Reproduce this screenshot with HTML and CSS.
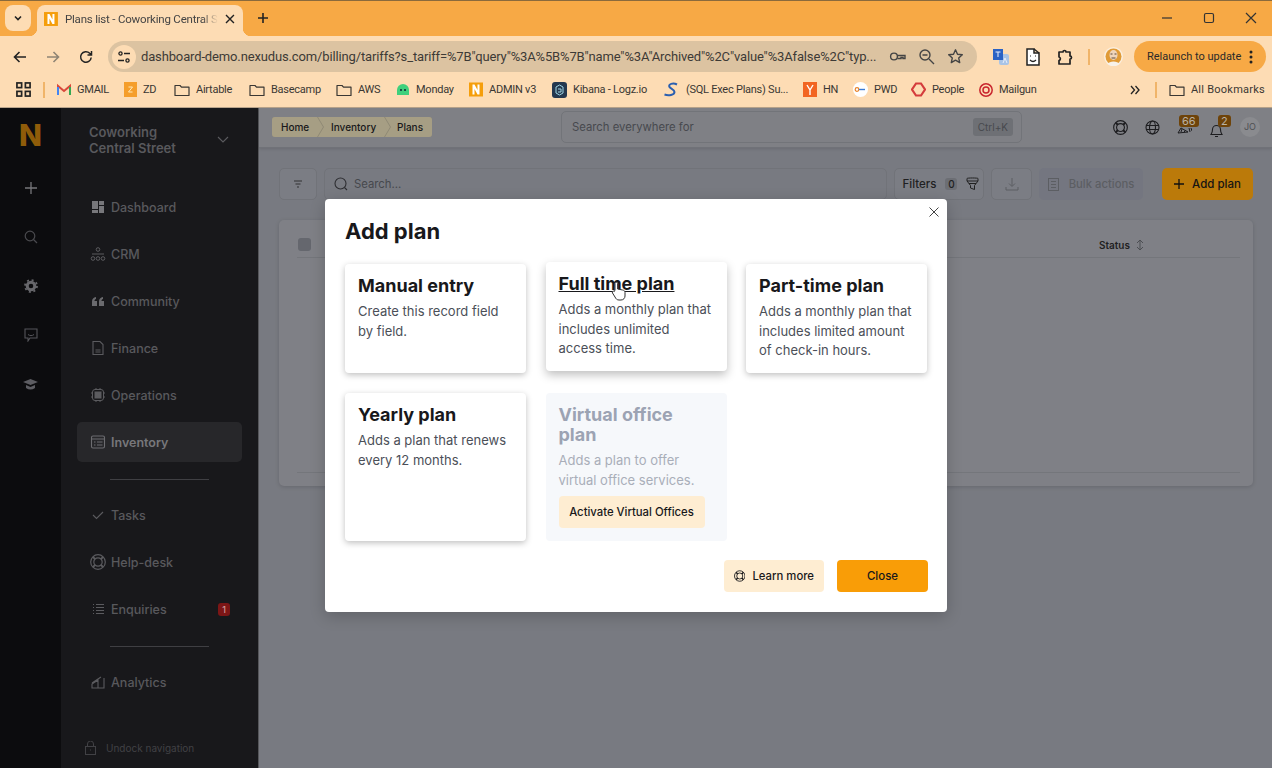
FILE: index.html
```html
<!DOCTYPE html>
<html lang="en">
<head>
    <meta charset="UTF-8">
    <meta name="viewport" content="width=device-width, initial-scale=1.0">
    <title>Plans list - Coworking Central Street</title>
    <link rel="stylesheet" href="styles.css">
</head>
<body>
    <svg class="defs" width="0" height="0">
        <symbol id="folder" viewBox="0 0 16 16"><path d="M1 3.500h5l1.500 1.700H15v8.300H1z" fill="none" stroke="currentColor" stroke-width="1.200" stroke-linejoin="round"/></symbol>
        <symbol id="buoy" viewBox="0 0 16 16"><g fill="none" stroke="currentColor" stroke-width="1.200"><circle cx="8" cy="8" r="7.300"/><circle cx="8" cy="8" r="4.200"/><path d="M2.900 2.900l2.200 2.200M13.100 2.900l-2.200 2.200M2.900 13.100l2.200-2.200M13.100 13.100l-2.200-2.200" stroke-width="2"/></g></symbol>
        <symbol id="nbox" viewBox="0 0 14 14"><rect width="14" height="14" fill="#f59e0b"/><path d="M3.500 12V2h2l3 5.600V2h2v10h-2l-3-5.600V12z" fill="#fff"/></symbol>
    </svg>

    <!-- Barra del navegador -->
    <header class="browser">
        <div class="tabstrip">
            <button class="tab-search">
                <svg width="10" height="10" viewBox="0 0 10 10"><path d="M2 3.500l3 3 3-3" fill="none" stroke="#222" stroke-width="1.600"/></svg>
            </button>
            <div class="tab">
                <svg class="fav" width="14" height="14"><use href="#nbox"/></svg>
                <span class="tab-title">Plans list - Coworking Central S</span>
                <svg width="10" height="10" viewBox="0 0 10 10"><path d="M1 1l8 8M9 1l-8 8" stroke="#222" stroke-width="1.400"/></svg>
            </div>
            <svg class="new-tab" width="12" height="12" viewBox="0 0 12 12"><path d="M6 1v10M1 6h10" stroke="#222" stroke-width="1.600"/></svg>
            <div class="win-controls">
                <svg width="12" height="12" viewBox="0 0 12 12"><path d="M1 6h10" stroke="#333" stroke-width="1.200"/></svg>
                <svg width="12" height="12" viewBox="0 0 12 12"><rect x="1.500" y="1.500" width="9" height="9" rx="1.500" fill="none" stroke="#333" stroke-width="1.200"/></svg>
                <svg width="12" height="12" viewBox="0 0 12 12"><path d="M1 1l10 10M11 1L1 11" stroke="#333" stroke-width="1.200"/></svg>
            </div>
        </div>

        <div class="toolbar">
            <div class="nav-btns">
                <svg width="16" height="16" viewBox="0 0 16 16"><path d="M14 8H3M7.500 3L2.500 8l5 5" fill="none" stroke="#222" stroke-width="1.600"/></svg>
                <svg width="16" height="16" viewBox="0 0 16 16"><path d="M2 8h11M8.500 3l5 5-5 5" fill="none" stroke="#8f8474" stroke-width="1.600"/></svg>
                <svg width="16" height="16" viewBox="0 0 16 16"><path d="M13.200 8.500a5.300 5.300 0 1 1-1.500-4.200L13.500 6M13.500 2v4h-4" fill="none" stroke="#222" stroke-width="1.500"/></svg>
            </div>
            <div class="omnibox">
                <span class="site-info">
                    <svg width="14" height="14" viewBox="0 0 14 14"><g fill="none" stroke="#222" stroke-width="1.300"><circle cx="3.500" cy="3.500" r="1.600"/><path d="M7 3.500h6M1 10.500h6"/><circle cx="10.500" cy="10.500" r="1.600"/></g></svg>
                </span>
                <span class="url">dashboard-demo.nexudus.com/billing/tariffs?s_tariff=%7B"query"%3A%5B%7B"name"%3A"Archived"%2C"value"%3Afalse%2C"typ...</span>
                <div class="omni-icons">
                    <svg width="17" height="17" viewBox="0 0 17 17"><g fill="none" stroke="#444" stroke-width="1.400"><circle cx="5" cy="8.500" r="3.400"/><path d="M8.400 7.500H16v3h-2v-1h-2v1H8.400"/></g></svg>
                    <svg width="17" height="17" viewBox="0 0 17 17"><g fill="none" stroke="#444" stroke-width="1.400"><circle cx="7" cy="7" r="5"/><path d="M11 11l5 5M4.500 7h5"/></g></svg>
                    <svg width="17" height="17" viewBox="0 0 17 17"><path d="M8.500 1.800l2 4.400 4.800.5-3.600 3.200 1 4.700-4.200-2.400-4.200 2.400 1-4.700L1.700 6.700l4.800-.5z" fill="none" stroke="#444" stroke-width="1.400" stroke-linejoin="round"/></svg>
                </div>
            </div>
            <div class="ext-icons">
                <svg width="18" height="18" viewBox="0 0 18 18"><rect x="7" y="6" width="10" height="11" rx="2" fill="#a9c4e6"/><rect x="1" y="1" width="10" height="11" fill="#2a62c4"/><path d="M3.500 4h5M6 4v5M11 15l2-5 2 5" fill="none" stroke="#e8eefa"/></svg>
                <svg width="16" height="18" viewBox="0 0 16 18"><path d="M2 1h7v4h5v12H2z" fill="#fff" stroke="#222" stroke-width="1.500"/><path d="M9 1l5 4" stroke="#222" stroke-width="1.500"/><path d="M5 8h1M10 8h1M5 12c2 2 4 2 6 0" fill="none" stroke="#222" stroke-width="1.200"/></svg>
                <svg width="18" height="18" viewBox="0 0 18 18"><path d="M3 4h4a1.500 1.500 0 0 1 3 0h4v4a1.500 1.500 0 0 1 0 3v5H3v-3.500a1.800 1.800 0 0 0 0-3.500z" fill="none" stroke="#222" stroke-width="1.700" stroke-linejoin="round"/></svg>
                <span class="ext-sep"></span>
                <svg width="19" height="19" viewBox="0 0 19 19"><circle cx="9.500" cy="9.500" r="9.500" fill="#fbeedd"/><circle cx="9.500" cy="9.500" r="8" fill="#e09a35"/><ellipse cx="9.500" cy="8" rx="4" ry="5" fill="#efd5bb"/><path d="M3.500 17c1.500-3.500 10.500-3.500 12 0a9 9 0 0 1-12 0z" fill="#f7f2ea"/><path d="M6.500 7h2M10.500 7h2M7.500 11h4" stroke="#5d4a38"/></svg>
            </div>
            <button class="relaunch">Relaunch to update
                <svg width="4" height="14" viewBox="0 0 4 14"><g fill="#222"><circle cx="2" cy="2" r="1.500"/><circle cx="2" cy="7" r="1.500"/><circle cx="2" cy="12" r="1.500"/></g></svg>
            </button>
        </div>

        <nav class="bookmarks">
            <svg class="apps" width="15" height="15" viewBox="0 0 16 16"><g fill="none" stroke="#222" stroke-width="1.800"><rect x="1" y="1" width="5" height="5"/><rect x="10" y="1" width="5" height="5"/><rect x="1" y="10" width="5" height="5"/><rect x="10" y="10" width="5" height="5"/></g></svg>
            <span class="bm-sep"></span>
            <a class="bm bm-gmail"><svg width="14" height="14" viewBox="0 0 14 14"><path d="M1 12V3l6 5 6-5v9" fill="none" stroke="#d9483b" stroke-width="2"/><path d="M1 12V4" stroke="#4285f4" stroke-width="2"/><path d="M13 12V4" stroke="#34a853" stroke-width="2"/></svg>GMAIL</a>
            <a class="bm bm-zd"><svg width="13" height="15" viewBox="0 0 13 15"><rect width="13" height="15" fill="#f59e2b"/><path d="M4.500 5h4L4.500 10h4" fill="none" stroke="#ffe9b8"/></svg>ZD</a>
            <a class="bm bm-air"><svg width="16" height="16"><use href="#folder"/></svg>Airtable</a>
            <a class="bm bm-base"><svg width="16" height="16"><use href="#folder"/></svg>Basecamp</a>
            <a class="bm bm-aws"><svg width="16" height="16"><use href="#folder"/></svg>AWS</a>
            <a class="bm bm-mon"><svg width="14" height="14" viewBox="0 0 14 14"><path d="M1 12V7a6 6 0 0 1 12 0v5z" fill="#3fd07c"/><circle cx="5" cy="7" r="1" fill="#123"/><circle cx="9" cy="7" r="1" fill="#123"/></svg>Monday</a>
            <a class="bm bm-n"><svg width="14" height="15"><use href="#nbox"/></svg>ADMIN v3</a>
            <a class="bm bm-kib"><svg width="15" height="16" viewBox="0 0 15 16"><rect width="15" height="16" rx="3" fill="#24384f"/><path d="M4 5l3.500-2L11 5v6l-3.500 2L4 11zM6 7h3v3H6" fill="none" stroke="#9fd7e6"/></svg>Kibana - Logz.io</a>
            <a class="bm bm-sql"><svg width="17" height="15" viewBox="0 0 17 15"><path d="M14 2.500C10 .5 5 2 6.500 5c1 2 5 2 5 5 0 3-6 4-10 2.500" fill="none" stroke="#2a5fb0" stroke-width="2"/></svg>(SQL Exec Plans) Su...</a>
            <a class="bm bm-hn"><svg width="14" height="15" viewBox="0 0 14 15"><rect width="14" height="15" fill="#f26522"/><path d="M4 3l3 5 3-5M7 8v5" fill="none" stroke="#fff" stroke-width="1.400"/></svg>HN</a>
            <a class="bm bm-pwd"><svg width="15" height="15" viewBox="0 0 15 15"><circle cx="7.500" cy="7.500" r="7.500" fill="#fff"/><circle cx="4" cy="7.500" r="1.800" fill="none" stroke="#e8842b" stroke-width="1.200"/><path d="M6 7.500h6" stroke="#3a7bd5" stroke-width="1.400"/></svg>PWD</a>
            <a class="bm bm-peo"><svg width="15" height="15" viewBox="0 0 15 15"><path d="M5 1.500h5l4 6-4 6H5l-4-6z" fill="none" stroke="#d43c3c" stroke-width="2.200"/></svg>People</a>
            <a class="bm bm-mail"><svg width="14" height="14" viewBox="0 0 14 14"><g fill="none" stroke="#c9252d" stroke-width="1.500"><circle cx="7" cy="7" r="6.200"/><circle cx="7" cy="7" r="3"/></g></svg>Mailgun</a>
            <div class="bm-end">
                <svg class="bm-more" width="10" height="10" viewBox="0 0 10 10"><path d="M1 1l3.500 4L1 9M5.500 1L9 5 5.500 9" fill="none" stroke="#222" stroke-width="1.300"/></svg>
                <span class="bm-sep"></span>
                <a class="bm bm-all"><svg width="16" height="16"><use href="#folder"/></svg>All Bookmarks</a>
            </div>
        </nav>
    </header>

    <div class="app">
        <!-- Riel de iconos -->
        <aside class="rail">
            <span class="rail-logo">N</span>
            <a class="rail-item"><svg width="14" height="14" viewBox="0 0 14 14"><path d="M7 1v12M1 7h12" stroke="#76767a" stroke-width="1.300"/></svg></a>
            <a class="rail-item"><svg width="14" height="14" viewBox="0 0 14 14"><g fill="none" stroke="#4a4a4e" stroke-width="1.200"><circle cx="6" cy="6" r="4.800"/><path d="M9.500 9.500L13 13"/></g></svg></a>
            <a class="rail-item"><svg width="14" height="14" viewBox="0 0 14 14"><circle cx="7" cy="7" r="3.800" fill="none" stroke="#67676b" stroke-width="3"/><circle cx="7" cy="7" r="6" fill="none" stroke="#67676b" stroke-width="1.800" stroke-dasharray="2 2.700"/></svg></a>
            <a class="rail-item"><svg width="14" height="14" viewBox="0 0 14 14"><path d="M1 1h12v9H6l-2 3v-3H1z" fill="none" stroke="#55555a" stroke-width="1.100"/><path d="M4 6.500c2 1.500 4 1.500 6 0" fill="none" stroke="#55555a"/></svg></a>
            <a class="rail-item"><svg width="15" height="13" viewBox="0 0 15 13"><path d="M0 4l7.500-3L15 4 7.500 7z" fill="#5d5d62"/><path d="M3 7v3c3 2 6 2 9 0V7L7.500 9z" fill="#5d5d62"/></svg></a>
        </aside>

        <!-- Navegacion -->
        <aside class="sidebar">
            <div class="brand">
                <span>Coworking<br>Central Street</span>
                <svg width="12" height="8" viewBox="0 0 12 8"><path d="M1 1l5 5 5-5" fill="none" stroke="#5b5b5f" stroke-width="1.100"/></svg>
            </div>
            <ul class="nav">
                <li class="nav-item"><svg width="16" height="16" viewBox="0 0 16 16" fill="#77777b"><rect x="2" y="2" width="6" height="8"/><rect x="9" y="2" width="5" height="4"/><rect x="9" y="7" width="5" height="7"/><rect x="2" y="11" width="6" height="3"/></svg>Dashboard</li>
                <li class="nav-item"><svg width="16" height="16" viewBox="0 0 16 16" fill="none" stroke="#5b5b5f"><circle cx="8" cy="3.500" r="1.800"/><circle cx="3" cy="12.500" r="1.800"/><circle cx="8" cy="12.500" r="1.800"/><circle cx="13" cy="12.500" r="1.800"/><path d="M2 8h12"/></svg>CRM</li>
                <li class="nav-item"><svg width="16" height="16" viewBox="0 0 16 16" fill="#6a6a6e"><path d="M2 13V8.500C2 6 3.500 4.500 6 4v2c-1 .3-1.500 1-1.500 2H7v5zM9 13V8.500C9 6 10.500 4.500 13 4v2c-1 .3-1.500 1-1.500 2H14v5z"/></svg>Community</li>
                <li class="nav-item"><svg width="16" height="16" viewBox="0 0 16 16" fill="none" stroke="#5b5b5f" stroke-width="1.100"><path d="M3 1.500h7l3 3v10H3zM5.500 10h5M5.500 12h5"/></svg>Finance</li>
                <li class="nav-item"><svg width="16" height="16" viewBox="0 0 16 16" fill="none" stroke="#5b5b5f"><rect x="2.500" y="2.500" width="11" height="11" rx="2.500"/><rect x="5" y="5" width="6" height="6" fill="#5b5b5f"/><path d="M1 6h1M1 10h1M14 6h1M14 10h1M6 1v1M10 1v1M6 14v1M10 14v1"/></svg>Operations</li>
                <li class="nav-item active"><svg width="16" height="16" viewBox="0 0 16 16" fill="none" stroke="#6d6d71" stroke-width="1.100"><rect x="1.500" y="2" width="13" height="12" rx="1.500"/><path d="M1.500 5h13M4 8h1.500M7 8h5.500M4 11h1.500M7 11h5.500"/></svg>Inventory</li>
            </ul>
            <hr class="nav-rule">
            <ul class="nav">
                <li class="nav-item"><svg width="16" height="16" viewBox="0 0 16 16" fill="none" stroke="#5b5b5f" stroke-width="1.100"><path d="M3 8l3.500 3.500L13 5"/></svg>Tasks</li>
                <li class="nav-item"><svg width="16" height="16" color="#5b5b5f"><use href="#buoy"/></svg>Help-desk</li>
                <li class="nav-item"><svg width="16" height="16" viewBox="0 0 16 16" fill="none" stroke="#5b5b5f" stroke-width="1.100"><path d="M6 3.500h8M6 6.500h8M6 9.500h8M6 12.500h8M3 3.500h1M3 6.500h1M3 9.500h1M3 12.500h1"/></svg>Enquiries<span class="nav-badge">1</span></li>
            </ul>
            <hr class="nav-rule">
            <ul class="nav">
                <li class="nav-item"><svg width="16" height="16" viewBox="0 0 16 16" fill="none" stroke="#5b5b5f" stroke-width="1.100"><path d="M2 14V10l6-4v8zM8 14h6V4M2 14h6M2 9l9-6"/></svg>Analytics</li>
            </ul>
            <div class="undock">
                <svg width="11" height="14" viewBox="0 0 11 14" fill="none" stroke="#414145"><rect x=".5" y="5.500" width="10" height="8"/><path d="M2.500 5.500V3a3 3 0 0 1 6 0v2.500"/><path d="M5 9h1"/></svg>
                Undock navigation
            </div>
        </aside>

        <main class="main">
            <div class="topbar">
                <ol class="crumbs">
                    <li class="crumb">Home</li>
                    <li class="crumb">Inventory</li>
                    <li class="crumb">Plans</li>
                </ol>
                <div class="global-search">
                    <span>Search everywhere for</span>
                    <kbd>Ctrl+K</kbd>
                </div>
                <div class="top-icons">
                    <a class="top-icon"><svg width="15" height="15" color="#1d1d20"><use href="#buoy"/></svg></a>
                    <a class="top-icon"><svg width="15" height="15" viewBox="0 0 15 15" fill="none" stroke="#1d1d20" stroke-width="1.100"><circle cx="7.500" cy="7.500" r="6.500"/><ellipse cx="7.500" cy="7.500" rx="3" ry="6.500"/><path d="M1 5.500h13M1 9.500h13"/></svg></a>
                    <a class="top-icon"><svg class="low" width="15" height="8" viewBox="0 0 15 8" fill="none" stroke="#1d1d20"><path d="M1 7l3-5 7 4zM4 6l1-3M7 6.500l1-2M12 2l1 4M14 2l1 3"/></svg><span class="count">66</span></a>
                    <a class="top-icon"><svg class="low" width="15" height="15" viewBox="0 0 15 15" fill="none" stroke="#1d1d20" stroke-width="1.100"><path d="M2 11.500c1-1.500 1.500-2.500 1.500-5a4 4 0 0 1 8 0c0 2.500.5 3.500 1.500 5zM6 13.500h3"/></svg><span class="count count-bell">2</span></a>
                    <span class="avatar">JO</span>
                </div>
            </div>

            <div class="content">
                <div class="list-tools">
                    <button class="tool tool-filter"><svg width="10" height="8" viewBox="0 0 10 8"><path d="M1 1h8M2.500 4h5M4 7h2" stroke="#333" stroke-width="1.100"/></svg></button>
                    <div class="list-search">
                        <svg width="14" height="14" viewBox="0 0 14 14" fill="none" stroke="#2e2e32" stroke-width="1.100"><circle cx="6.500" cy="6.500" r="5.500"/><path d="M10.500 10.500L13 13"/></svg>
                        <span>Search...</span>
                    </div>
                    <button class="tool tool-filters">Filters<span class="zero">0</span>
                        <svg width="13" height="14" viewBox="0 0 13 14" fill="none" stroke="#222"><path d="M1 1.500C1 .8 12 .8 12 1.500v2.500L8.500 8.500v4l-4-1.500V8.500L1 4zM1 4h11M3 6.500h7"/></svg>
                    </button>
                    <button class="tool tool-dl"><svg width="14" height="14" viewBox="0 0 14 14" fill="none" stroke="#5c5e63"><path d="M7 1v8M4 6.500L7 9.500l3-3M1 10v3h12v-3"/></svg></button>
                    <button class="tool tool-bulk"><svg width="11" height="13" viewBox="0 0 11 13" fill="none" stroke="#5c5e63"><rect x=".5" y=".5" width="10" height="12"/><path d="M3 3.500h5M3 6.500h5M3 9.500h5"/></svg>Bulk actions</button>
                    <button class="tool tool-add"><svg width="10" height="10" viewBox="0 0 10 10"><path d="M5 0v10M0 5h10" stroke="#111" stroke-width="1.300"/></svg>Add plan</button>
                </div>
                <section class="table-card">
                    <div class="table-head">
                        <span class="check"></span>
                        <span class="col-status">Status
                            <svg width="8" height="12" viewBox="0 0 8 12" fill="none" stroke="#4c4e53"><path d="M1 4l3-3 3 3M1 8l3 3 3-3M4 1v10"/></svg>
                        </span>
                    </div>
                    <div class="table-foot"></div>
                </section>
            </div>
        </main>

        <!-- Ventana Add plan -->
        <div class="modal-wrap">
            <div class="modal">
                <svg class="modal-x" width="10" height="10" viewBox="0 0 10 10"><path d="M.5.5l9 9M9.500.5l-9 9" stroke="#444" stroke-width="1"/></svg>
                <h2 class="modal-title">Add plan</h2>
                <div class="plan-grid">
                    <article class="plan">
                        <h3>Manual entry</h3>
                        <p>Create this record field by field.</p>
                    </article>
                    <article class="plan plan-hover">
                        <h3>Full time plan</h3>
                        <p>Adds a monthly plan that includes unlimited access time.</p>
                        <svg class="cursor" width="16" height="20" viewBox="0 0 16 20"><path d="M4 9V2.500a1.300 1.300 0 0 1 2.600 0V8l5 1c1.500.3 2.400 1 2.400 2.500V15c0 2-1.500 4-4 4H8c-2 0-3-1-4-3L1.500 12c-.8-1.500.8-2.500 1.800-1.500z" fill="#fff" stroke="#333" stroke-width="1"/></svg>
                    </article>
                    <article class="plan">
                        <h3>Part-time plan</h3>
                        <p>Adds a monthly plan that includes limited amount of check-in hours.</p>
                    </article>
                    <article class="plan">
                        <h3>Yearly plan</h3>
                        <p>Adds a plan that renews every 12 months.</p>
                    </article>
                    <article class="plan plan-off">
                        <h3>Virtual office plan</h3>
                        <p>Adds a plan to offer virtual office services.</p>
                        <button class="btn-soft">Activate Virtual Offices</button>
                    </article>
                </div>
                <div class="modal-foot">
                    <button class="btn-soft btn-learn"><svg width="14" height="14"><use href="#buoy"/></svg>Learn more</button>
                    <button class="btn-close">Close</button>
                </div>
            </div>
        </div>
    </div>
</body>
</html>
```

FILE: styles.css
```css
* {
    box-sizing: border-box;
}
html, body {
    margin: 0;
    height: 100%;
    overflow: hidden;
}
body {
    width: 1272px;
    height: 768px;
    display: flex;
    flex-direction: column;
    font-family: Inter, sans-serif;
    background-color: #77797f;
}
ul, ol {
    list-style: none;
    margin: 0;
    padding: 0;
}
button {
    font-family: inherit;
    border: none;
    cursor: pointer;
}
.defs {
    position: absolute;
}

/* Navegador */
.browser {
    height: 108px;
    flex: none;
    font-family: Roboto, sans-serif;
    color: #2a2a2a;
    background-color: #fddcb4;
}
.tabstrip {
    height: 36px;
    display: flex;
    align-items: flex-end;
    background-color: #f7a945;
    border-top: 1px solid #8a6a3c;
    padding-left: 5px;
}
.tab-search {
    width: 26px;
    height: 26px;
    margin-bottom: 5px;
    padding: 0;
    border-radius: 8px;
    background-color: #fddcb4;
    display: flex;
    align-items: center;
    justify-content: center;
}
.tab {
    position: relative;
    width: 206px;
    height: 31px;
    margin-left: 6px;
    padding: 0 8px 4px 7px;
    display: flex;
    align-items: center;
    gap: 7px;
    font-size: 11.500px;
    letter-spacing: -0.2px;
    border-radius: 8px 8px 0 0;
    background-color: #fddcb4;
}
.tab::before, .tab::after {
    content: "";
    position: absolute;
    bottom: 0;
    width: 8px;
    height: 8px;
}
.tab::before {
    left: -8px;
    background: radial-gradient(circle at 0 0, #f7a945 8px, #fddcb4 8.500px);
}
.tab::after {
    right: -8px;
    background: radial-gradient(circle at 100% 0, #f7a945 8px, #fddcb4 8.500px);
}
.tab-title {
    width: 154px;
    white-space: nowrap;
    color: #444;
    -webkit-mask-image: linear-gradient(90deg, #000 90%, transparent);
    mask-image: linear-gradient(90deg, #000 90%, transparent);
}
.new-tab {
    margin: 0 0 12px 14px;
}
.win-controls {
    margin-left: auto;
    padding-right: 15px;
    margin-bottom: 12px;
    display: flex;
    gap: 30px;
}
.toolbar {
    height: 39px;
    display: flex;
    align-items: center;
    padding: 3px 6px 1px 12px;
}
.nav-btns {
    display: flex;
    gap: 17px;
}
.omnibox {
    width: 869px;
    height: 31px;
    margin-left: 14px;
    display: flex;
    align-items: center;
    border-radius: 16px;
    background-color: #dcc3a1;
    padding-left: 4px;
}
.site-info {
    width: 24px;
    height: 24px;
    flex: none;
    border-radius: 50%;
    background-color: #fddcb4;
    display: flex;
    align-items: center;
    justify-content: center;
}
.url {
    margin-left: 5px;
    width: 735px;
    flex: none;
    white-space: nowrap;
    font-size: 13px;
    letter-spacing: -0.14px;
    color: #3d3a36;
}
.omni-icons {
    margin-left: 13px;
    display: flex;
    gap: 12px;
}
.ext-icons {
    display: flex;
    align-items: center;
    gap: 15px;
    margin-left: 15px;
}
.ext-sep {
    width: 2px;
    height: 16px;
    margin: 0 -1px;
    background-color: #f0b469;
}
.relaunch {
    margin-left: 11px;
    width: 132px;
    height: 31px;
    border-radius: 16px;
    background-color: #f7a945;
    font-family: Roboto, sans-serif;
    font-size: 11px;
    color: #2a2a2a;
    display: flex;
    align-items: center;
    justify-content: space-between;
    padding: 0 13px 0 13px;
    white-space: nowrap;
}
.bookmarks {
    height: 33px;
    display: flex;
    align-items: center;
    padding: 0 7px 3px 16px;
    font-size: 11px;
    letter-spacing: -0.25px;
    border-bottom: 1px solid #b9a58c;
}
.bm {
    display: flex;
    align-items: center;
    gap: 6px;
    white-space: nowrap;
    color: #3a3733;
}
.bm-sep {
    width: 2px;
    height: 16px;
    margin: 0 12px 0 12px;
    background-color: #f0b469;
}
.bm svg {
    flex: none;
}
.bm-gmail { width: 67px; }
.bm-zd { width: 50px; }
.bm-air { width: 75px; }
.bm-base { width: 87px; }
.bm-aws { width: 60px; }
.bm-mon { width: 73px; }
.bm-n { width: 83px; }
.bm-kib { width: 111px; }
.bm-sql { width: 140px; }
.bm-hn { width: 50px; }
.bm-pwd { width: 58px; }
.bm-peo { width: 68px; }
.bm-all {
    letter-spacing: 0.25px;
}
.bm-more {
    margin-right: 3px;
}
.bm-end {
    margin-left: auto;
    display: flex;
    align-items: center;
}

/* Aplicacion */
.app {
    position: relative;
    flex: 1;
    display: flex;
    min-height: 0;
}
.rail {
    width: 61px;
    flex: none;
    background-color: #0c0c0e;
    display: flex;
    flex-direction: column;
    align-items: center;
}
.rail-logo {
    height: 55.500px;
    font-size: 30px;
    font-weight: 800;
    line-height: 54px;
    color: #8f5c09;
}
.rail-item {
    height: 49px;
    display: flex;
    align-items: center;
}
.sidebar {
    width: 198px;
    flex: none;
    display: flex;
    flex-direction: column;
    background-color: #18181b;
    padding-left: 16px;
    color: #59595d;
    font-size: 12.500px;
    border-right: 1px solid #55565a;
}
.brand {
    height: 79px;
    padding: 0 29px 15px 12px;
    display: flex;
    align-items: center;
    justify-content: space-between;
    font-size: 13px;
    font-weight: 600;
    line-height: 16px;
}
.nav {
    display: flex;
    flex-direction: column;
    gap: 7px;
    width: 165px;
}
.nav-item {
    height: 40px;
    display: flex;
    align-items: center;
    gap: 5px;
    padding-left: 13px;
    border-radius: 5px;
    font-weight: 500;
}
.nav-item svg {
    flex: none;
}
.nav-item.active {
    background-color: #27272a;
    color: #77777b;
    font-weight: 600;
}
.nav-badge {
    margin-left: auto;
    margin-right: 12px;
    width: 12px;
    height: 13px;
    border-radius: 3px;
    background-color: #7c1616;
    color: #c99;
    font-size: 9px;
    text-align: center;
    line-height: 13px;
}
.nav-rule {
    width: 99px;
    height: 1px;
    margin: 17px 0 15px 33px;
    border: none;
    background-color: #3f3f43;
}
.undock {
    margin-top: auto;
    padding: 0 0 13px 8px;
    display: flex;
    align-items: center;
    gap: 10px;
    color: #414145;
    font-size: 10px;
    line-height: 14px;
}
.main {
    flex: 1;
    min-width: 0;
    display: flex;
    flex-direction: column;
    background-color: #787a81;
}
.topbar {
    height: 40px;
    flex: none;
    display: flex;
    align-items: center;
    padding: 0 12px 1px 13px;
    background-color: #7f8085;
    border-bottom: 1px solid #707278;
    box-shadow: 0 1px 3px rgba(0, 0, 0, 0.12);
}
.crumbs {
    display: flex;
    flex: none;
    width: 160px;
    height: 20px;
    border-radius: 3px;
    overflow: hidden;
    background-color: #8f8975;
}
.crumb {
    height: 20px;
    flex: none;
    padding: 0 0 0 13px;
    margin-right: -5px;
    display: flex;
    align-items: center;
    font-size: 10px;
    font-weight: 500;
    color: #18181b;
    background-color: #a69e84;
    clip-path: polygon(0 0, calc(100% - 6px) 0, 100% 50%, calc(100% - 6px) 100%, 0 100%, 6px 50%);
}
.crumb:nth-child(1) {
    width: 51px;
    padding-left: 9px;
    clip-path: polygon(0 0, calc(100% - 6px) 0, 100% 50%, calc(100% - 6px) 100%, 0 100%);
}
.crumb:nth-child(2) {
    width: 72px;
}
.crumb:nth-child(3) {
    width: 47px;
    margin-right: 0;
    padding-left: 12px;
    clip-path: polygon(0 0, 100% 0, 100% 100%, 0 100%, 6px 50%);
}
.global-search {
    width: 462px;
    height: 32px;
    margin-left: 129px;
    padding: 0 8px 0 10px;
    display: flex;
    align-items: center;
    justify-content: space-between;
    border: 1px solid #727479;
    border-radius: 5px;
    background-color: #7f8085;
    font-size: 11.300px;
    color: #47494e;
}
kbd {
    padding: 3px 5px;
    border-radius: 3px;
    background-color: #6e7075;
    font-family: Inter, sans-serif;
    font-size: 10px;
    color: #47494e;
}
.top-icons {
    margin-left: auto;
    display: flex;
    align-items: center;
    padding-left: 82px;
}
.top-icon {
    position: relative;
    width: 32px;
    height: 24px;
    display: flex;
    align-items: center;
    justify-content: center;
}
.low {
    margin-top: 6px;
}
.count {
    position: absolute;
    top: 0;
    left: 11px;
    padding: 0 3px;
    height: 12px;
    border-radius: 3px;
    background-color: #6e4309;
    color: #b9b1a3;
    font-size: 11px;
    line-height: 12px;
}
.count-bell {
    left: 18px;
}
.avatar {
    width: 20px;
    height: 20px;
    margin-left: 8px;
    border-radius: 50%;
    background-color: #8a8b8f;
    color: #4e4f53;
    font-size: 9px;
    line-height: 20px;
    text-align: center;
}
.content {
    padding: 20px 19px 0 20px;
}
.list-tools {
    display: flex;
    gap: 7px;
    height: 32px;
}
.tool {
    height: 32px;
    display: flex;
    align-items: center;
    justify-content: center;
    border: 1px solid #717379;
    border-radius: 5px;
    background-color: #7b7d84;
    font-size: 11.500px;
    font-weight: 500;
    color: #1f1f22;
    padding: 0;
}
.tool-filter {
    width: 38px;
}
.list-search {
    width: 563px;
    padding-left: 9px;
    display: flex;
    align-items: center;
    gap: 6px;
    border: 1px solid #717379;
    border-radius: 5px;
    font-size: 11.300px;
    color: #46484d;
}
.tool-filters {
    width: 90px;
    gap: 9px;
    padding-left: 4px;
}
.zero {
    width: 12px;
    height: 12px;
    border-radius: 3px;
    background-color: #6c6e74;
    font-size: 10px;
    line-height: 12px;
}
.tool-dl {
    width: 41px;
}
.tool-bulk {
    width: 104px;
    gap: 10px;
    font-size: 11.300px;
    border: none;
    background-color: #747680;
    color: #5c5e63;
}
.tool-add {
    width: 91px;
    margin-left: 12px;
    gap: 8px;
    border: none;
    background-color: #bb7a0a;
    color: #151413;
}
.table-card {
    margin-top: 20px;
    height: 266px;
    padding: 0 13px 0 18px;
    border-radius: 5px;
    background-color: #7f8086;
    box-shadow: 0 1px 4px rgba(0, 0, 0, 0.15);
}
.table-head {
    height: 38px;
    display: flex;
    align-items: center;
    justify-content: space-between;
    padding: 12px 96px 0 1px;
    border-bottom: 1px solid #74767b;
}
.check {
    width: 13px;
    height: 13px;
    border-radius: 3px;
    background-color: #65676e;
}
.col-status {
    display: flex;
    align-items: center;
    gap: 6px;
    font-size: 10px;
    font-weight: 600;
    color: #1f1f22;
}
.table-foot {
    height: 215px;
    border-bottom: 1px solid #74767b;
}

/* Ventana */
.modal-wrap {
    position: absolute;
    inset: 0;
    display: flex;
    justify-content: center;
    align-items: flex-start;
    padding-top: 91px;
    pointer-events: none;
}
.modal {
    position: relative;
    width: 622px;
    height: 413px;
    padding: 20px 19px 20px 20px;
    border-radius: 4px;
    background-color: #fff;
    box-shadow: 0 4px 16px rgba(0, 0, 0, 0.2);
}
.modal-x {
    position: absolute;
    top: 8px;
    right: 8px;
}
.modal-title {
    margin: 0;
    font-size: 22px;
    font-weight: 700;
    line-height: 24px;
    color: #18181b;
}
.plan-grid {
    margin-top: 21px;
    display: grid;
    grid-template-columns: repeat(3, 181px);
    grid-template-rows: 109px 148px;
    gap: 20px 19.500px;
}
.plan {
    position: relative;
    padding: 12px 13px;
    border-radius: 4px;
    background-color: #fff;
    box-shadow: 0 2px 6px rgba(0, 0, 0, 0.25);
}
.plan h3 {
    margin: 0;
    font-size: 18px;
    font-weight: 700;
    line-height: 20px;
    color: #18181b;
}
.plan p {
    margin: 6px 0 0;
    font-size: 13px;
    line-height: 19.500px;
    color: #4b4f58;
}
.plan-hover {
    transform: translateY(-2px);
    box-shadow: 0 4px 10px rgba(0, 0, 0, 0.25);
}
.plan-hover h3 {
    text-decoration: underline;
}
.cursor {
    position: absolute;
    left: 65px;
    top: 19px;
}
.plan-off {
    background-color: #f6f8fb;
    box-shadow: none;
}
.plan-off h3 {
    color: #9ca3b3;
}
.plan-off p {
    color: #a9aeb9;
}
.btn-soft {
    height: 32px;
    padding: 0 10px;
    border-radius: 4px;
    background-color: #feedd2;
    font-size: 11.300px;
    font-weight: 500;
    color: #18181b;
    white-space: nowrap;
}
.plan-off .btn-soft {
    margin-top: 6px;
    width: 146px;
    padding: 0;
}
.modal-foot {
    margin-top: 19px;
    display: flex;
    justify-content: flex-end;
    gap: 13px;
}
.btn-learn {
    width: 100px;
    display: flex;
    align-items: center;
    gap: 7px;
}
.btn-close {
    width: 91px;
    height: 32px;
    padding-top: 1px;
    border-radius: 4px;
    background-color: #f99d07;
    font-size: 11.500px;
    font-weight: 500;
    color: #18181b;
}
```
